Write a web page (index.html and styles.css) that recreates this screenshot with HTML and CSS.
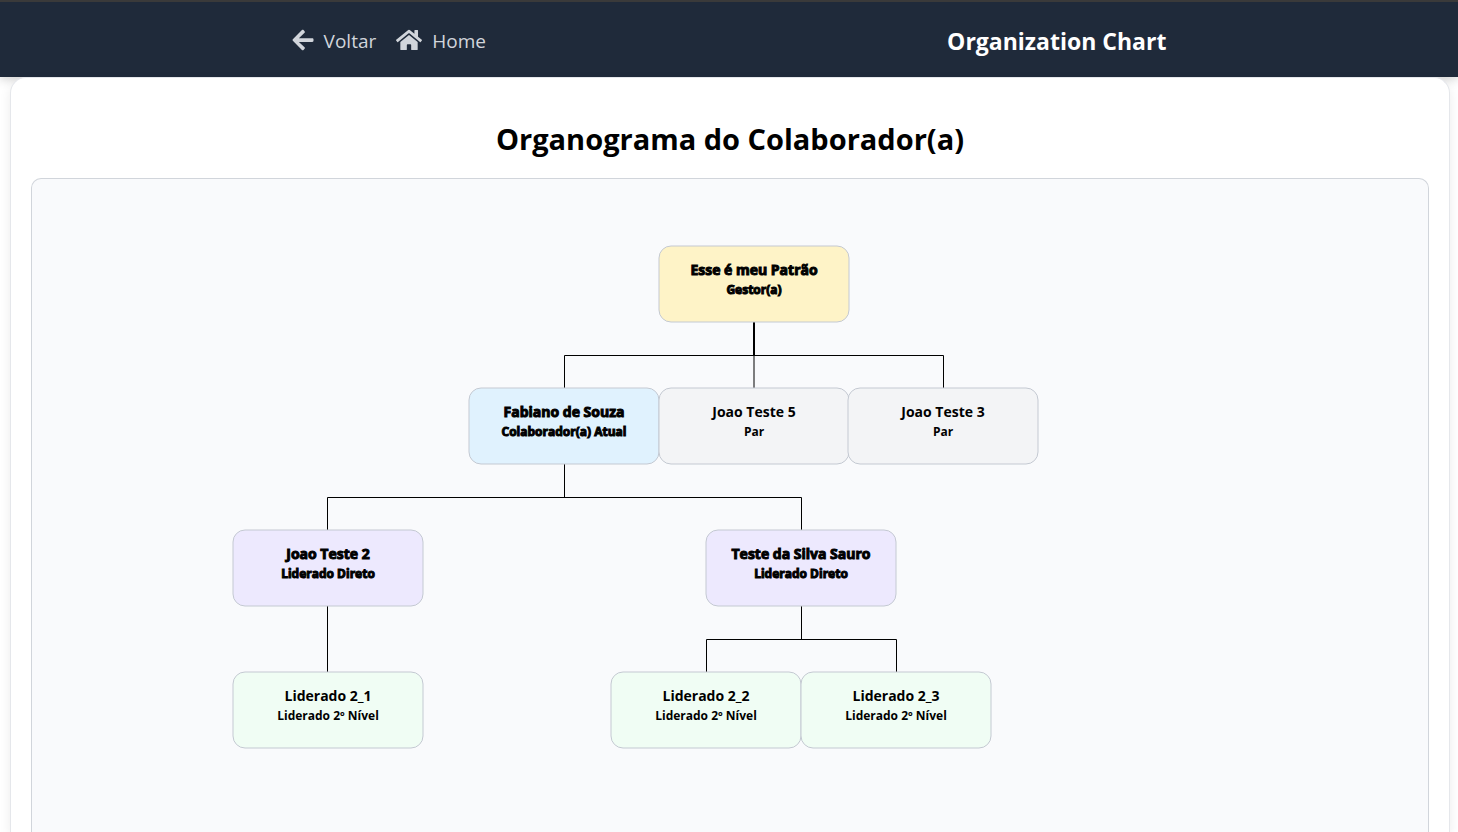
FILE: index.html
```html
<!DOCTYPE html>
<html lang="pt-BR">
<head>
  <meta charset="utf-8">
  <meta name="viewport" content="width=device-width, initial-scale=1">
  <title>Organization Chart</title>
  <link rel="stylesheet" href="styles.css">
</head>
<body>
  <header class="topbar">
    <nav class="topbar-nav">
      <a class="nav-link" href="#voltar">
        <svg class="nav-icon nav-icon-back" viewBox="0 0 448 512" aria-hidden="true"><path d="M257.500 445.100l-22.200 22.200c-9.400 9.400-24.600 9.400-33.900 0L7 273c-9.400-9.400-9.400-24.600 0-33.900L201.400 44.700c9.400-9.400 24.600-9.400 33.900 0l22.200 22.200c9.500 9.500 9.300 25-.4 34.300L136.600 216H424c13.300 0 24 10.700 24 24v32c0 13.300-10.700 24-24 24H136.600l120.500 114.800c9.800 9.300 10 24.800.4 34.300z"/></svg>
        <span>Voltar</span>
      </a>
      <a class="nav-link" href="#home">
        <svg class="nav-icon nav-icon-home" viewBox="0 0 576 512" aria-hidden="true"><path d="M280.370 148.260L96 300.110V464a16 16 0 0 0 16 16l112.060-.29a16 16 0 0 0 15.920-16V368a16 16 0 0 1 16-16h64a16 16 0 0 1 16 16v95.640a16 16 0 0 0 16 16.050L464 480a16 16 0 0 0 16-16V300L295.670 148.260a12.190 12.190 0 0 0-15.300 0zM571.600 251.470L488 182.560V44.050a12 12 0 0 0-12-12h-56a12 12 0 0 0-12 12v72.610L318.470 43a48 48 0 0 0-61 0L4.340 251.470a12 12 0 0 0-1.600 16.900l25.500 31A12 12 0 0 0 45.150 301l235.220-193.740a12.190 12.190 0 0 1 15.300 0L530.900 301a12 12 0 0 0 16.900-1.600l25.500-31a12 12 0 0 0-1.700-16.930z"/></svg>
        <span>Home</span>
      </a>
    </nav>
    <div class="topbar-title">Organization Chart</div>
  </header>

  <main class="card">
    <h1 class="card-title">Organograma do Colaborador(a)</h1>
    <div class="chart">
      <svg class="chart-canvas" role="img" aria-label="Organograma">
        <svg x="50%" overflow="visible">
          <g class="links">
            <path class="strong" d="M24 143V176"/>
            <path d="M24 176V209M-165.500 209V176.500H213.500V209"/>
            <path d="M-165.500 285V318.500M-402.500 351V318.500H71.500V351"/>
            <path d="M-402.500 427V493"/>
            <path d="M71.500 427V460.500M-23.500 493V460.500H166.500V493"/>
          </g>
          <g class="node parent manager" transform="translate(24 67)">
            <rect x="-95" width="190" height="76" rx="12"/>
            <text class="name" y="29">Esse é meu Patrão</text>
            <text class="role" y="48">Gestor(a)</text>
          </g>
          <g class="node parent current" transform="translate(-166 209)">
            <rect x="-95" width="190" height="76" rx="12"/>
            <text class="name" y="29">Fabiano de Souza</text>
            <text class="role" y="48">Colaborador(a) Atual</text>
          </g>
          <g class="node peer" transform="translate(24 209)">
            <rect x="-95" width="190" height="76" rx="12"/>
            <text class="name" y="29">Joao Teste 5</text>
            <text class="role" y="48">Par</text>
          </g>
          <g class="node peer" transform="translate(213 209)">
            <rect x="-95" width="190" height="76" rx="12"/>
            <text class="name" y="29">Joao Teste 3</text>
            <text class="role" y="48">Par</text>
          </g>
          <g class="node parent direct" transform="translate(-402 351)">
            <rect x="-95" width="190" height="76" rx="12"/>
            <text class="name" y="29">Joao Teste 2</text>
            <text class="role" y="48">Liderado Direto</text>
          </g>
          <g class="node parent direct" transform="translate(71 351)">
            <rect x="-95" width="190" height="76" rx="12"/>
            <text class="name" y="29">Teste da Silva Sauro</text>
            <text class="role" y="48">Liderado Direto</text>
          </g>
          <g class="node indirect" transform="translate(-402 493)">
            <rect x="-95" width="190" height="76" rx="12"/>
            <text class="name" y="29">Liderado 2_1</text>
            <text class="role" y="48">Liderado 2º Nível</text>
          </g>
          <g class="node indirect" transform="translate(-24 493)">
            <rect x="-95" width="190" height="76" rx="12"/>
            <text class="name" y="29">Liderado 2_2</text>
            <text class="role" y="48">Liderado 2º Nível</text>
          </g>
          <g class="node indirect" transform="translate(166 493)">
            <rect x="-95" width="190" height="76" rx="12"/>
            <text class="name" y="29">Liderado 2_3</text>
            <text class="role" y="48">Liderado 2º Nível</text>
          </g>
        </svg>
      </svg>
    </div>
  </main>
</body>
</html>
```

FILE: styles.css
```css
* {
  box-sizing: border-box;
}

body {
  margin: 0;
  min-height: 100vh;
  display: flex;
  flex-direction: column;
  background: #fff;
  color: #000;
  font-family: "Open Sans", "Noto Sans", sans-serif;
}

.topbar {
  display: flex;
  align-items: center;
  justify-content: space-between;
  padding: 20px 20% 19px;
  border-top: 2px solid #3a3a3a;
  background: #1f2a3a;
  box-shadow: 0 2px 10px rgba(0, 0, 0, 0.2);
}

.topbar-nav {
  display: flex;
  gap: 20px;
}

.nav-link {
  display: flex;
  align-items: center;
  gap: 10px;
  color: #d1d5db;
  font-size: 19px;
  line-height: 36px;
  text-decoration: none;
}

.nav-link span,
.topbar-title {
  padding-top: 2px;
  line-height: 34px;
}

.nav-icon {
  height: 25px;
  padding-bottom: 1px;
  fill: currentColor;
}

.nav-icon-back {
  width: 22px;
}

.nav-icon-home {
  width: 26px;
}

.topbar-title {
  color: #fff;
  font-size: 23px;
  font-weight: 700;
}

.card {
  position: relative;
  flex: 1;
  display: flex;
  flex-direction: column;
  margin: 0 8px 0 10px;
  padding: 39px 20px 0;
  border: 1px solid #e5e7eb;
  border-bottom: 0;
  border-radius: 16px 16px 0 0;
  background: #fff;
  box-shadow: 0 4px 12px rgba(0, 0, 0, 0.08);
}

.card-title {
  margin: 0 0 17px;
  font-size: 29px;
  font-weight: 700;
  line-height: 44px;
  text-align: center;
}

.chart {
  flex: 1;
  display: flex;
  border: 1px solid #d1d5db;
  border-bottom: 0;
  border-radius: 10px 10px 0 0;
  background: #f9fafc;
}

.chart-canvas {
  flex: 1;
  min-height: 640px;
}

.links path {
  fill: none;
  stroke: #000;
  stroke-width: 1px;
}

.links .strong {
  stroke-width: 2px;
}

.node rect {
  stroke: #c4c9d2;
  stroke-width: 1px;
}

.manager rect {
  fill: #fef3c7;
}

.current rect {
  fill: #e0f2fe;
}

.peer rect {
  fill: #f3f4f6;
}

.direct rect {
  fill: #ede9fe;
}

.indirect rect {
  fill: #f0fdf4;
}

.node text {
  fill: #000;
  font-weight: 700;
  text-anchor: middle;
}

.node .name {
  font-size: 14px;
}

.node .role {
  font-size: 12px;
}

.parent text {
  stroke: #000;
  stroke-width: 1px;
}
```
